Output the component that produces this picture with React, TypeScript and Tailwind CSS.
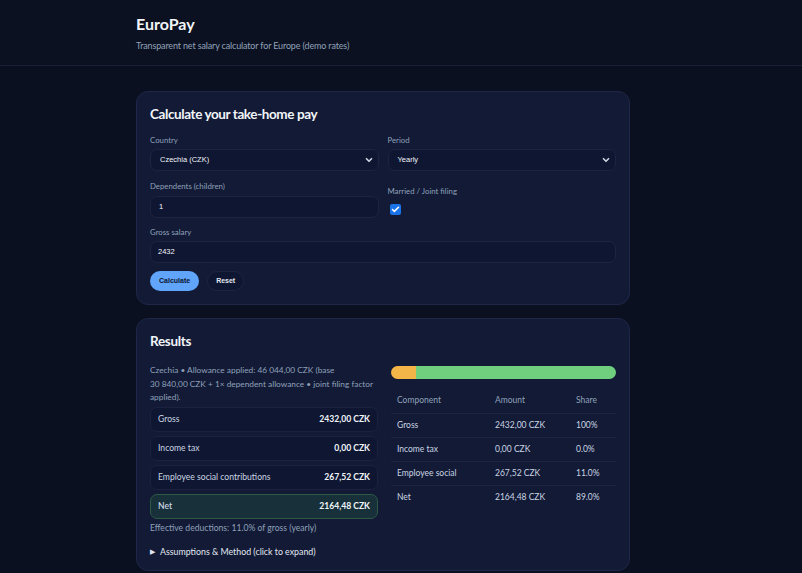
export default function App() {
  const rows = [
    { label: "Gross", amount: "2432,00 CZK", share: "100%" },
    { label: "Income tax", amount: "0,00 CZK", share: "0.0%" },
    { label: "Employee social", amount: "267,52 CZK", share: "11.0%" },
    { label: "Net", amount: "2164,48 CZK", share: "89.0%" },
  ];

  const arial = { fontFamily: '"Liberation Sans", Arial, sans-serif' };
  const note =
    "Czechia • Allowance applied: 46\u00a0044,00\u00a0CZK (base 30\u00a0840,00\u00a0CZK + 1× dependent allowance • joint filing factor applied).";

  const chevron = (
    <svg className="w-2.5 h-2.5 text-slate-300" viewBox="0 0 24 24" fill="none" stroke="currentColor" strokeWidth={4}>
      <path d="M6 9l6 6 6-6" strokeLinecap="round" strokeLinejoin="round" />
    </svg>
  );

  return (
    <div
      className="min-h-screen bg-[#0b1020] text-slate-200"
      style={{ fontFamily: 'Lato, "Noto Sans", sans-serif' }}
    >
      {/* Header */}
      <header className="h-[66px] border-b border-[#1a2136] bg-[#0c1121]">
        <div className="w-[494px] ml-[136px] pt-[13px]">
          <h1 className="text-[16px] font-bold leading-[22px] text-slate-100">EuroPay</h1>
          <p className="mt-[4px] text-[9px] tracking-[-0.15px] leading-[14px] text-slate-400">
            Transparent net salary calculator for Europe (demo rates)
          </p>
        </div>
      </header>

      <main className="w-[494px] ml-[136px] pt-[25px] flex flex-col gap-[13px]">
        {/* Calculator card */}
        <section className="rounded-[12px] border border-[#1e2747] bg-[#121a36] px-[13px] pt-[12px] pb-[13px]">
          <h2 className="text-[13.5px] font-bold tracking-[-0.4px] leading-[20px] text-slate-100">Calculate your take-home pay</h2>

          <div className="mt-[10px] grid grid-cols-2 gap-x-[9px]">
            <div>
              <label className="block text-[7.8px] leading-[12px] text-slate-400">Country</label>
              <div className="mt-[3px] h-[22px] rounded-[7px] border border-[#1c2442] bg-[#0f1631] flex items-center justify-between pl-[9px] pr-[4px]">
                <span className="text-[7.5px] text-slate-100" style={arial}>Czechia (CZK)</span>
                {chevron}
              </div>
              <label className="block mt-[9px] text-[7.8px] leading-[12px] text-slate-400">Dependents (children)</label>
              <div className="mt-[4px] h-[22px] rounded-[7px] border border-[#1c2442] bg-[#0f1631] flex items-center pl-[8px]">
                <span className="text-[7.5px] text-slate-100" style={arial}>1</span>
              </div>
            </div>
            <div>
              <label className="block text-[7.8px] leading-[12px] text-slate-400">Period</label>
              <div className="mt-[3px] h-[22px] rounded-[7px] border border-[#1c2442] bg-[#0f1631] flex items-center justify-between pl-[9px] pr-[4px]">
                <span className="text-[7.5px] text-slate-100" style={arial}>Yearly</span>
                {chevron}
              </div>
              <label className="block mt-[14px] text-[7.8px] leading-[12px] text-slate-400">Married / Joint filing</label>
              <div className="mt-[7px] ml-[2px] w-[11px] h-[11px] rounded-[2px] bg-[#1a73e8] flex items-center justify-center">
                <svg className="w-[9px] h-[9px]" viewBox="0 0 24 24" fill="none" stroke="white" strokeWidth={4}>
                  <path d="M4 12l5 5L20 6" strokeLinecap="round" strokeLinejoin="round" />
                </svg>
              </div>
            </div>
          </div>

          <label className="block mt-[8px] text-[7.8px] leading-[12px] text-slate-400">Gross salary</label>
          <div className="mt-[3px] h-[22px] rounded-[7px] border border-[#1c2442] bg-[#0f1631] flex items-center pl-[7px]">
            <span className="text-[7.5px] text-slate-100" style={arial}>2432</span>
          </div>

          <div className="mt-[8px] flex gap-[8px]" style={arial}>
            <button className="h-[20px] px-[9px] rounded-full bg-[#60a5fa] text-[7px] font-bold text-[#0b1533]">Calculate</button>
            <button className="h-[20px] px-[8px] rounded-full bg-[#0f1631] border border-[#1c2442] text-[7px] font-bold text-slate-200">Reset</button>
          </div>
        </section>

        {/* Results card */}
        <section className="rounded-[12px] border border-[#1e2747] bg-[#121a36] px-[13px] pt-[12px] pb-[12px]">
          <h2 className="text-[13.5px] font-bold tracking-[-0.3px] leading-[20px] text-slate-100">Results</h2>

          <div className="mt-[13px] grid grid-cols-[228px_1fr] gap-x-[13px]">
            <div>
              <p className="text-[8.3px] leading-[13.5px] text-slate-400">{note}</p>
              <div className="mt-[2px] flex flex-col gap-[4px]">
                {[
                  ["Gross", "2432,00 CZK"],
                  ["Income tax", "0,00 CZK"],
                  ["Employee social contributions", "267,52 CZK"],
                ].map(([l, v]) => (
                  <div key={l} className="h-[25px] rounded-[7px] border border-[#1a2240] bg-[#0f1631] flex items-center justify-between px-[7px]">
                    <span className="text-[8.6px] text-slate-300">{l}</span>
                    <span className="text-[8.6px] font-bold text-slate-100">{v}</span>
                  </div>
                ))}
                <div className="h-[25px] rounded-[7px] border border-[#2d5a44] bg-[#17303a] flex items-center justify-between px-[7px]">
                  <span className="text-[8.6px] font-semibold text-slate-300">Net</span>
                  <span className="text-[8.6px] font-bold text-slate-100">2164,48 CZK</span>
                </div>
              </div>
              <p className="mt-[3px] text-[8.6px] leading-[13px] text-slate-400">Effective deductions: 11.0% of gross (yearly)</p>
              <div className="mt-[10px] flex items-center gap-[5px] text-[8.8px] text-slate-200">
                <span className="text-[7px]">▶</span>
                <span>Assumptions &amp; Method (click to expand)</span>
              </div>
            </div>

            <div className="pt-[2px]">
              <div className="h-[13px] rounded-full overflow-hidden flex bg-[#1a2240]">
                <div className="w-[11%] bg-[#f4b548]" />
                <div className="flex-1 bg-[#6fcf7f]" />
              </div>
              <table className="mt-[10px] w-full text-[8.5px] text-slate-300 border-collapse">
                <thead>
                  <tr className="border-b border-[#1c2442] text-slate-400">
                    <th className="h-[24px] pl-[6px] text-left font-normal w-[104px]">Component</th>
                    <th className="text-left font-normal w-[81px]">Amount</th>
                    <th className="text-left font-normal">Share</th>
                  </tr>
                </thead>
                <tbody>
                  {rows.map((r, i) => (
                    <tr key={r.label} className={i < rows.length - 1 ? "border-b border-[#1c2442]" : ""}>
                      <td className="h-[24px] pl-[6px]">{r.label}</td>
                      <td>{r.amount}</td>
                      <td>{r.share}</td>
                    </tr>
                  ))}
                </tbody>
              </table>
            </div>
          </div>
        </section>
      </main>
    </div>
  );
}
